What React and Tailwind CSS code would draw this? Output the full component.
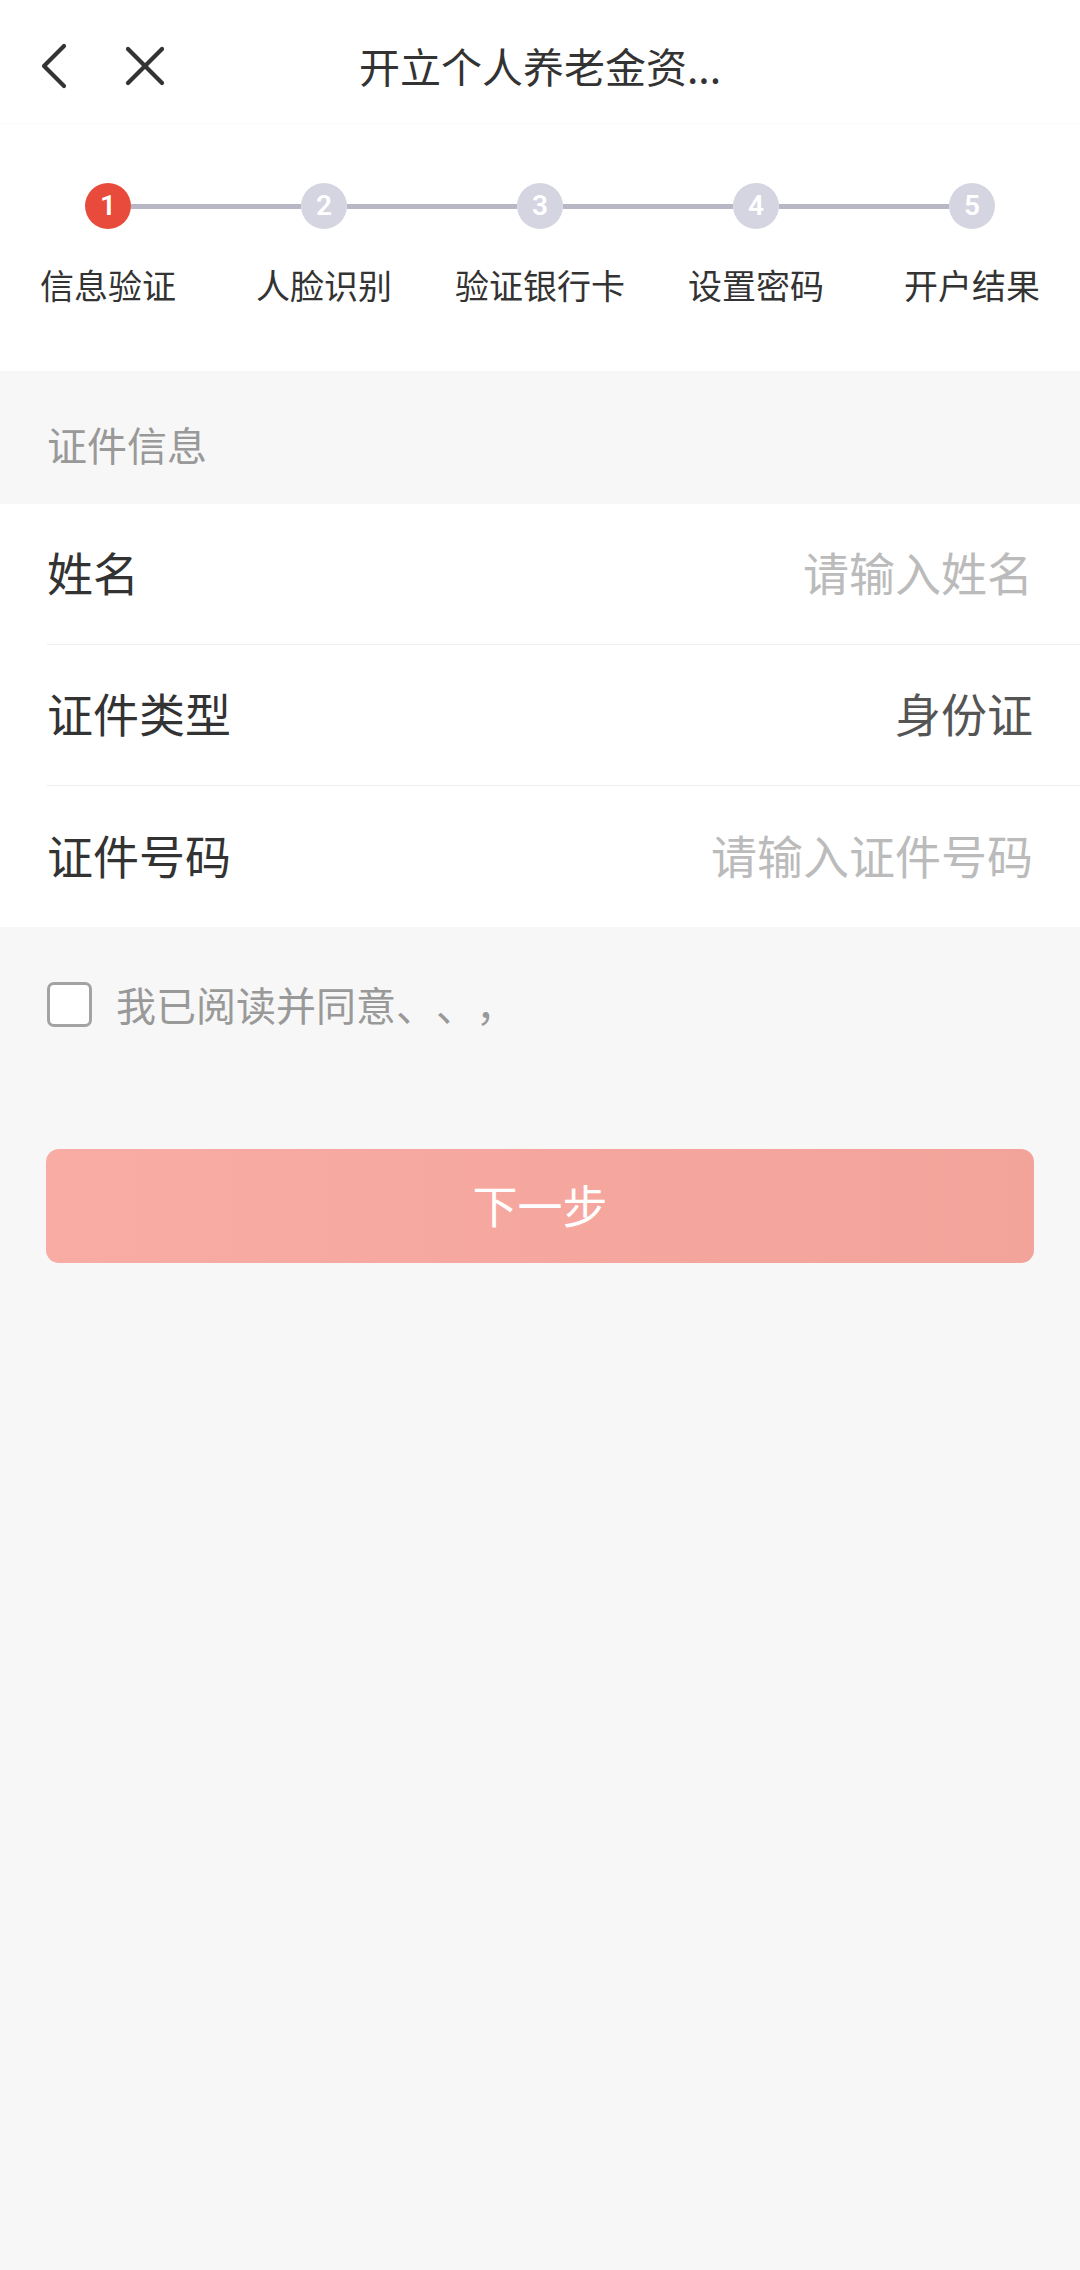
import React from "react";

const steps = ["信息验证", "人脸识别", "验证银行卡", "设置密码", "开户结果"];

function Step({ label, index, total }) {
  const active = index === 0;
  return (
    <div className="flex flex-col items-center">
      <div className="flex w-full items-center">
        <div className={`h-[5px] flex-1 ${index === 0 ? "bg-transparent" : "bg-[#b7b7c5]"}`} />
        <div
          className={`flex h-[46px] w-[46px] shrink-0 items-center justify-center rounded-full text-[28px] font-semibold text-white ${
            active ? "bg-[#e84b3c]" : "bg-[#d5d5e1]"
          }`}
          style={{ fontFamily: "Roboto, sans-serif" }}
        >
          {index + 1}
        </div>
        <div className={`h-[5px] flex-1 ${index === total - 1 ? "bg-transparent" : "bg-[#b7b7c5]"}`} />
      </div>
      <div className="mt-[32px] mb-[2px] text-[34px] leading-[48px] text-[#333333] whitespace-nowrap">{label}</div>
    </div>
  );
}

function Row({ label, value, placeholder, border }) {
  return (
    <div className={`flex h-[141px] items-center justify-between pr-[47px] pb-[6px] ${border ? "border-b border-[#eeeeee]" : ""}`}>
      <span className="text-[46px] leading-[64px] text-[#333333]">{label}</span>
      <span className={`text-[46px] leading-[64px] ${placeholder ? "text-[#bbbbbb]" : "text-[#555555]"}`}>{value}</span>
    </div>
  );
}

export default function App() {
  return (
    <div
      className="min-h-[2270px] w-[1080px] bg-[#f7f7f7]"
      style={{ fontFamily: '"Noto Sans CJK SC", "Noto Sans", sans-serif' }}
    >
      {/* Nav bar */}
      <div className="grid h-[124px] grid-cols-[1fr_auto_1fr] items-center border-b border-[#fbfbfb] bg-white pt-[8px]">
        <div className="flex items-center pl-[40px]">
          <svg width="28" height="46" viewBox="0 0 28 46" className="shrink-0">
            <polyline points="24,3 4,23 24,43" fill="none" stroke="#333333" strokeWidth="4.2" strokeLinecap="round" strokeLinejoin="round" />
          </svg>
          <svg width="40" height="40" viewBox="0 0 40 40" className="ml-[57px] shrink-0">
            <line x1="3" y1="3" x2="37" y2="37" stroke="#333333" strokeWidth="4.2" strokeLinecap="round" />
            <line x1="37" y1="3" x2="3" y2="37" stroke="#333333" strokeWidth="4.2" strokeLinecap="round" />
          </svg>
        </div>
        <div className="pb-[2px] text-[41px] leading-[56px] text-[#333333]">开立个人养老金资...</div>
        <div />
      </div>

      {/* Stepper */}
      <div className="grid grid-cols-5 bg-white pt-[59px] pb-[60px]">
        {steps.map((s, i) => (
          <Step key={s} label={s} index={i} total={steps.length} />
        ))}
      </div>

      {/* Section header */}
      <div className="h-[133px] pl-[47px] pt-[45px] text-[40px] leading-[56px] text-[#999999]">证件信息</div>

      {/* Form */}
      <div className="bg-white pl-[47px]">
        <Row label="姓名" value="请输入姓名" placeholder border />
        <Row label="证件类型" value="身份证" border />
        <Row label="证件号码" value="请输入证件号码" placeholder />
      </div>

      {/* Agreement */}
      <div className="flex items-center pl-[47px] pt-[55px]">
        <div className="h-[45px] w-[45px] rounded-[7px] border-[3px] border-[#a3a3a3] bg-white" />
        <span className="ml-[24px] text-[40px] leading-[45px] text-[#999999] [text-spacing-trim:space-all] [font-feature-settings:'halt'_0]">
          我已阅读并同意、、，
        </span>
      </div>

      {/* Button */}
      <div className="px-[46px] pt-[122px]">
        <div className="flex h-[114px] items-center justify-center rounded-[13px] bg-linear-to-r from-[#f9aca4] to-[#f2a39a] pb-[3px] text-[45px] leading-[60px] text-white">
          下一步
        </div>
      </div>
    </div>
  );
}
